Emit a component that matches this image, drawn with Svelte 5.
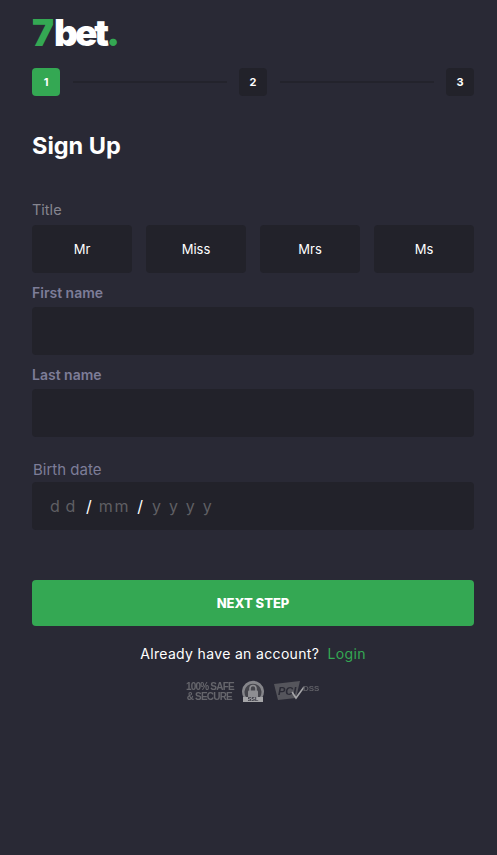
<script>
  const steps = [1, 2, 3];
  const titles = ['Mr', 'Miss', 'Mrs', 'Ms'];
</script>

<div class="signup">
  <div class="logo"><span class="green seven">7</span>bet<span class="green dot">.</span></div>

  <!-- steps -->
  <div class="steps">
    {#each steps as step, i}
      {#if i > 0}<span class="step-line"></span>{/if}
      <span class="step" class:active={step === 1}>{step}</span>
    {/each}
  </div>

  <h1>Sign Up</h1>

  <div class="label-title">Title</div>
  <div class="titles">
    {#each titles as title}
      <button type="button" class="title-btn">{title}</button>
    {/each}
  </div>

  <label class="label" for="first-name">First name</label>
  <input id="first-name" class="field" type="text" />

  <label class="label last" for="last-name">Last name</label>
  <input id="last-name" class="field" type="text" />

  <div class="label-birth">Birth date</div>
  <div class="field birth">
    <span class="ph">d d</span><span class="sep">/</span><span class="ph mm">mm</span><span class="sep">/</span><span class="ph yy">y y y y</span>
  </div>

  <button type="button" class="next">NEXT STEP</button>

  <p class="login">Already have an account? <a href="#login">Login</a></p>

  <div class="badges">
    <div class="safe">100% SAFE<br />&amp; SECURE</div>
    <svg class="ssl" width="24" height="24" viewBox="0 0 24 24" aria-hidden="true">
      <path d="M3 19 A11 11 0 1 1 21 19 Z" fill="#85858a" />
      <path d="M5 18 A8.5 8.5 0 1 1 19 18 Z" fill="#45454c" />
      <path d="M9 12 V9.5 a3 3 0 0 1 6 0 V12" fill="none" stroke="#8e8e92" stroke-width="1.6" />
      <rect x="7" y="11.5" width="10" height="7" rx="1" fill="#8e8e92" />
      <rect x="2" y="18" width="20" height="5" fill="#a5a5a8" />
      <text x="12" y="22.3" text-anchor="middle" class="ssl-text">SSL</text>
    </svg>
    <svg class="pci" width="46" height="20" viewBox="0 0 46 20" aria-hidden="true">
      <path d="M0 3 L26 0 L22 17 L4 19 Z" fill="#55555c" />
      <text x="4" y="14" class="pci-text">PCI</text>
      <path d="M18 11 L22 17 L30 6" fill="none" stroke="#a5a5a8" stroke-width="1.6" />
      <text x="29" y="10" class="dss-text">DSS</text>
    </svg>
  </div>
</div>

<style>
  :global(body) {
    background: #292935;
  }

  .signup {
    min-height: 855px;
    box-sizing: border-box;
    padding: 12px 23px 0 32px;
    background: #292935;
    font-family: "Inter", sans-serif;
    color: #fff;
  }

  /* ── Logo ── */
  .logo {
    height: 42px;
    line-height: 41px;
    font-family: "Inter", sans-serif;
    font-size: 37px;
    font-weight: 900;
    letter-spacing: -3px;
    color: #fff;
  }
  .green { color: #34a853; }
  .seven { margin-right: 3px; }

  /* ── Steps ── */
  .steps {
    display: flex;
    align-items: center;
    margin-top: 14px;
  }
  .step {
    width: 28px;
    height: 28px;
    flex: none;
    display: flex;
    align-items: center;
    justify-content: center;
    background: #22222a;
    border-radius: 4px;
    font-size: 11px;
    font-weight: 700;
  }
  .step.active { background: #34a853; }
  .step-line {
    flex: 1;
    height: 2px;
    margin: 0 12.5px;
    background: #23232c;
  }

  h1 {
    margin: 33px 0 0;
    font-size: 23.5px;
    line-height: 34px;
    font-weight: 700;
  }

  /* ── Title ── */
  .label-title {
    margin-top: 37px;
    font-size: 14.5px;
    line-height: 20px;
    color: #85858f;
  }
  .titles {
    display: grid;
    grid-template-columns: repeat(4, 100px);
    gap: 14px;
    margin-top: 5px;
  }
  .title-btn {
    height: 48px;
    padding: 0;
    border: none;
    border-radius: 4px;
    background: #22222a;
    color: #fff;
    font-family: "Inter", sans-serif;
    font-size: 13px;
    font-weight: 400;
  }

  /* ── Fields ── */
  .label {
    display: block;
    margin-top: 10px;
    font-size: 14px;
    line-height: 20px;
    font-weight: 600;
    color: #7d7d98;
  }
  .label + .field { margin-top: 4px; }
  .label.last { margin-top: 10px; }
  .field {
    display: block;
    width: 442px;
    height: 48px;
    box-sizing: border-box;
    border: none;
    border-radius: 4px;
    background: #22222a;
  }
  .label-birth {
    margin: 23px 0 0 1px;
    font-size: 15px;
    line-height: 20px;
    color: #7d7d98;
  }
  .birth {
    display: flex;
    align-items: center;
    margin-top: 2px;
    padding-left: 18px;
    font-size: 16px;
  }
  .ph { color: #5f5f63; letter-spacing: 0.6px; }
  .sep { color: #fff; margin-left: 10px; }
  .mm { margin-left: 7px; letter-spacing: 1.8px; }
  .mm + .sep { margin-left: 7px; }
  .yy { margin-left: 9px; letter-spacing: 1.7px; }

  /* ── Actions ── */
  .next {
    display: block;
    width: 442px;
    height: 46px;
    margin-top: 50px;
    border: none;
    border-radius: 4px;
    background: #34a853;
    color: #fff;
    font-family: "Inter", sans-serif;
    font-size: 13px;
    font-weight: 800;
  }
  .login {
    width: 442px;
    margin: 18px 0 0;
    font-size: 14px;
    line-height: 20px;
    letter-spacing: 0.34px;
    text-align: center;
  }
  .login a {
    margin-left: 4px;
    color: #34a853;
    text-decoration: none;
  }

  /* ── Badges ── */
  .badges {
    display: flex;
    align-items: center;
    justify-content: center;
    gap: 9px;
    width: 442px;
    margin-top: 15px;
    filter: blur(0.5px);
  }
  .safe {
    width: 46px;
    margin-top: 2px;
    font-family: "Liberation Sans", sans-serif;
    font-size: 10px;
    line-height: 10px;
    font-weight: 700;
    letter-spacing: -0.8px;
    white-space: nowrap;
    text-align: right;
    color: #66666c;
  }
  .ssl-text {
    font-family: "Liberation Sans", sans-serif;
    font-size: 5.5px;
    font-weight: 700;
    fill: #2a2a35;
  }
  .pci-text {
    font-family: "Liberation Sans", sans-serif;
    font-size: 11px;
    font-weight: 700;
    font-style: italic;
    fill: #2a2a35;
  }
  .dss-text {
    font-family: "Liberation Sans", sans-serif;
    font-size: 8px;
    font-weight: 700;
    fill: #5e5e65;
  }
</style>
